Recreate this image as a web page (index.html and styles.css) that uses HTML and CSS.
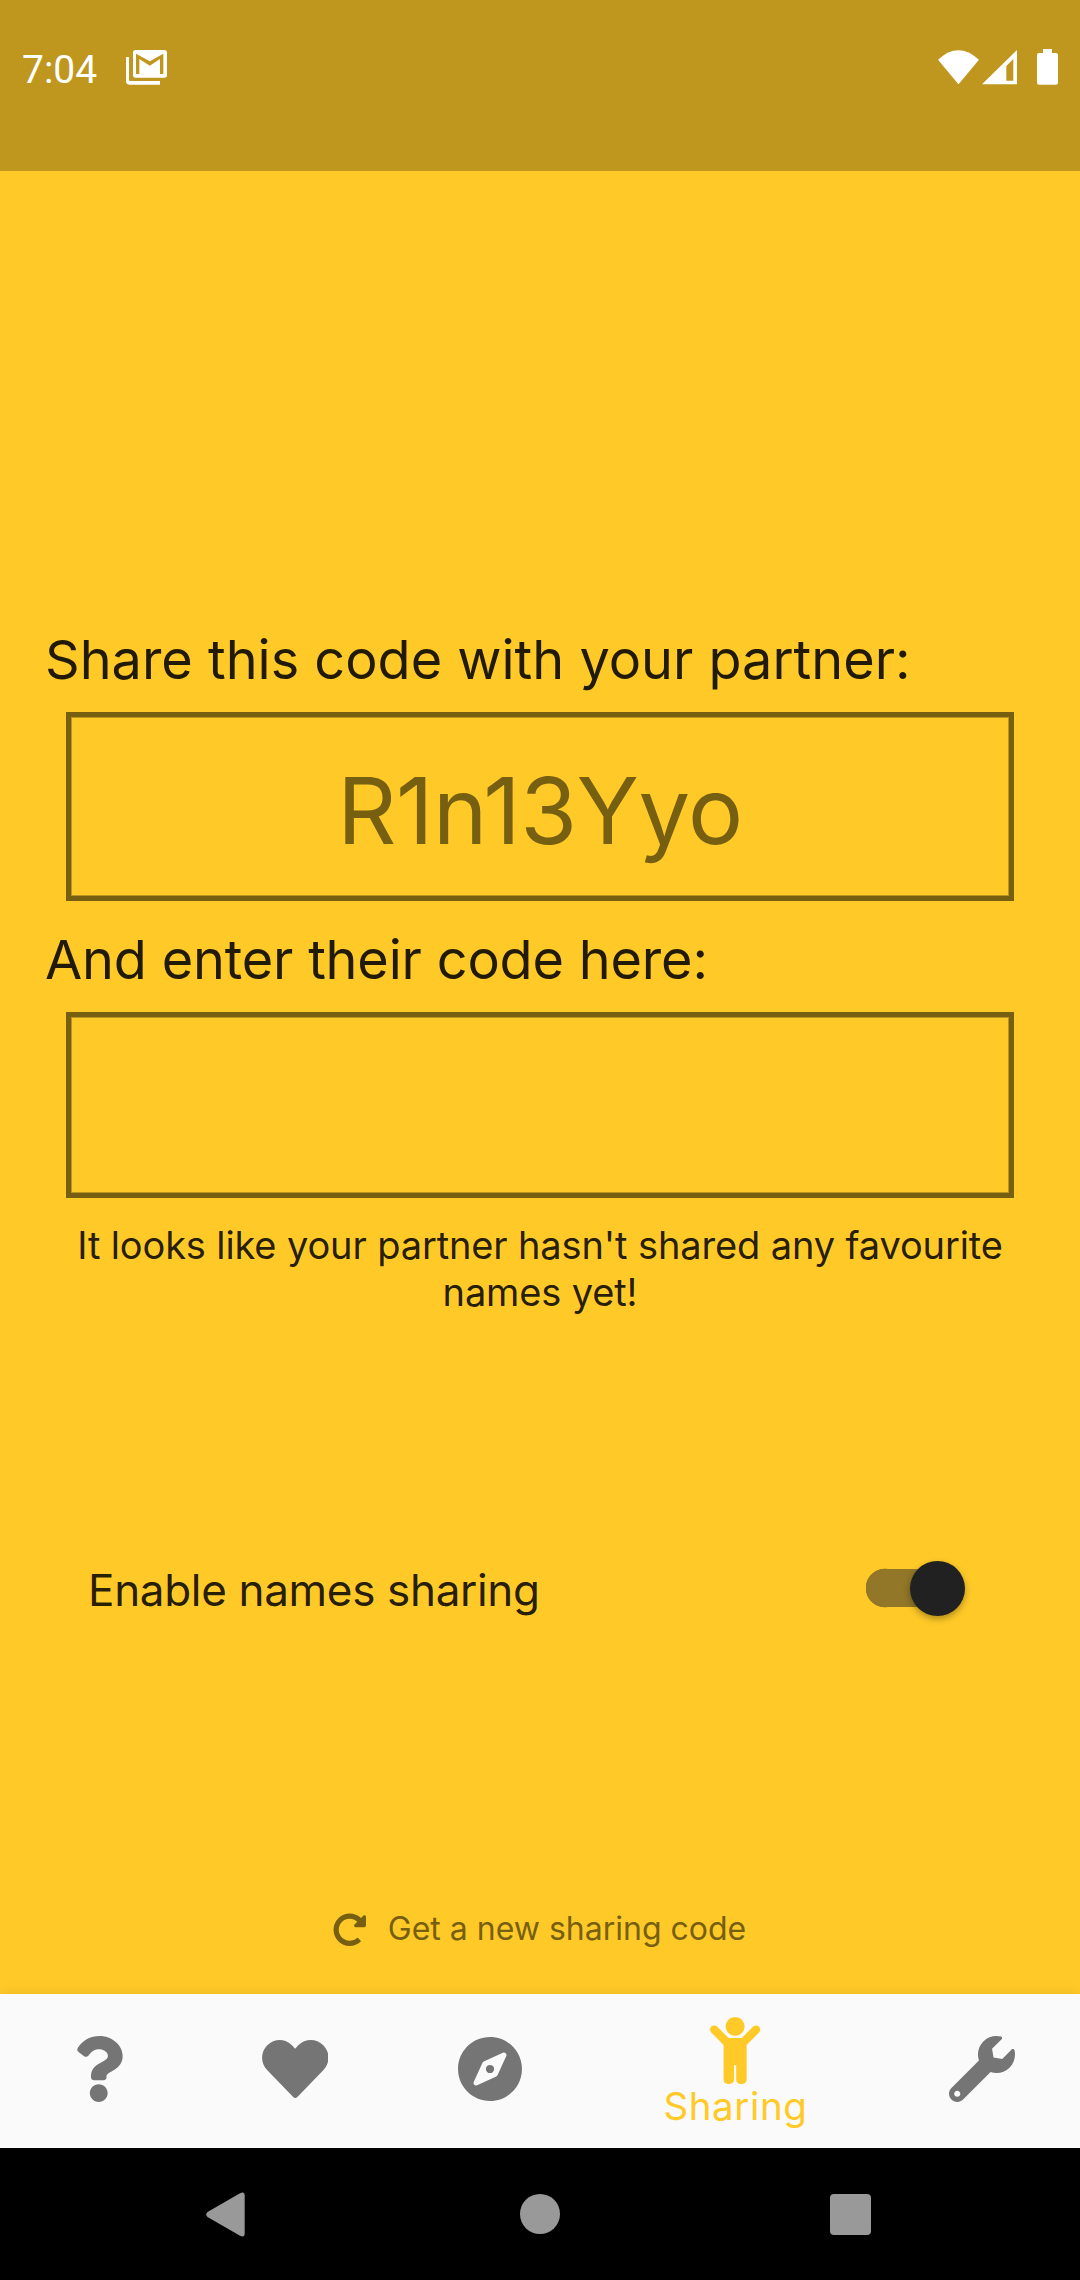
FILE: index.html
```html
<!DOCTYPE html>
<html lang="en">
<head>
<meta charset="utf-8">
<title>Sharing</title>
<link rel="stylesheet" href="styles.css">
</head>
<body>
<div class="screen">
  <header class="status">
    <span class="clock">7:04</span>
    <svg class="mail" viewBox="378 90 123 104" fill="#fff"><path d="M378 111h9v69q0 3 3 3h90v11H388q-10 0-10-10z"/><path fill-rule="evenodd" d="M407 90h86q8 0 8 8v67q0 8-8 8h-86q-8 0-8-8V98q0-8 8-8zM408 101v61h10v-45l31.500 20 30.500-20v45h10v-61l-40.500 23z"/></svg>
    <svg class="wifi" viewBox="114 90 123 103" fill="#fff"><path d="M114 119Q175 63 237 119L175.500 193z"/></svg>
    <svg class="signal" viewBox="246 91 105 103" fill="#fff"><path fill-rule="evenodd" d="M351 91V194H246zM340 118L319 139V183H340z"/></svg>
    <svg class="battery" viewBox="411 87 63 107" fill="#fff"><path d="M429 87h27v12h12q6 0 6 6v83q0 6-6 6h-51q-6 0-6-6v-83q0-6 6-6h12z"/></svg>
  </header>

  <main class="content">
    <h1 class="heading">Share this code with your partner:</h1>
    <div class="box box-code">R1n13Yyo</div>
    <h1 class="heading heading-entry">And enter their code here:</h1>
    <div class="box box-entry"></div>
    <p class="note">It looks like your partner hasn't shared any favourite names yet!</p>
    <div class="option">
      <span class="option-label">Enable names sharing</span>
      <span class="switch"><span class="thumb"></span></span>
    </div>
    <div class="renew">
      <svg class="redo" viewBox="0 0 512 512" fill="#775f12"><path d="M256.455 8c66.269.119 126.437 26.233 170.859 68.685l35.715-35.715C478.149 25.851 504 36.559 504 57.941V192c0 13.255-10.745 24-24 24H345.941c-21.382 0-32.090-25.851-16.971-40.971l41.750-41.750c-30.864-28.899-70.801-44.907-113.230-45.273-92.398-.798-170.283 73.977-169.484 169.442C88.764 348.009 162.184 424 256 424c41.127 0 79.997-14.678 110.629-41.556 4.743-4.161 11.906-3.908 16.368.553l39.662 39.662c4.872 4.872 4.631 12.815-.482 17.433C378.202 479.813 319.926 504 256 504 119.034 504 8.001 392.967 8 256.002 7.999 119.193 119.646 7.755 256.455 8z"/></svg>
      <span>Get a new sharing code</span>
    </div>
  </main>

  <nav class="tabs">
    <span class="tab"><svg width="49.500" height="66" viewBox="0 0 384 512"><path d="M202.021 0C122.202 0 70.503 32.703 29.914 91.026c-7.363 10.580-5.093 25.086 5.178 32.874l43.138 32.709c10.373 7.865 25.132 6.026 33.253-4.148 25.049-31.381 43.630-49.449 82.757-49.449 30.764 0 68.816 19.799 68.816 49.631 0 22.552-18.617 34.134-48.993 51.164-35.423 19.860-82.299 44.576-82.299 106.405V320c0 13.255 10.745 24 24 24h72.471c13.255 0 24-10.745 24-24v-5.773c0-42.860 125.268-44.645 125.268-160.627C377.504 66.256 286.902 0 202.021 0zM192 373.459c-38.196 0-69.271 31.075-69.271 69.271 0 38.195 31.075 69.270 69.271 69.270s69.271-31.075 69.271-69.271-31.075-69.270-69.271-69.270z"/></svg></span>
    <span class="tab"><svg width="66.600" height="66" viewBox="664 168 200 198"><path d="M763.500 206L754 196C733 175 701 175 680 196C659 217 659 249 680 271L757 350Q764 358 771 350L848 271C869 249 869 217 848 196C827 175 794 175 773 196Z"/></svg></span>
    <span class="tab"><svg width="64" height="66" viewBox="0 0 496 512"><path d="M225.380 233.370c-12.500 12.500-12.500 32.760 0 45.250 12.490 12.500 32.760 12.500 45.250 0 12.500-12.500 12.500-32.760 0-45.250-12.500-12.490-32.760-12.490-45.250 0zM248 8C111.030 8 0 119.030 0 256s111.030 248 248 248 248-111.030 248-248S384.970 8 248 8zm126.140 148.050L308.170 300.400a31.938 31.938 0 0 1-15.770 15.770l-144.340 65.970c-16.650 7.610-33.810-9.550-26.200-26.200l65.980-144.350a31.938 31.938 0 0 1 15.770-15.770l144.340-65.970c16.650-7.600 33.800 9.550 26.190 26.200z"/></svg></span>
    <span class="tab tab-active"><svg width="50.250" height="67" viewBox="0 0 384 512"><path d="M120 72c0-39.765 32.235-72 72-72s72 32.235 72 72c0 39.764-32.235 72-72 72s-72-32.236-72-72zm254.627 1.373c-12.496-12.497-32.758-12.497-45.254 0L242.745 160H141.254L54.627 73.373c-12.496-12.497-32.758-12.497-45.254 0-12.497 12.497-12.497 32.758 0 45.255L104 213.254V480c0 17.673 14.327 32 32 32h16c17.673 0 32-14.327 32-32V368h16v112c0 17.673 14.327 32 32 32h16c17.673 0 32-14.327 32-32V213.254l94.627-94.626c12.497-12.497 12.497-32.758 0-45.255z"/></svg><span class="tab-label">Sharing</span></span>
    <span class="tab"><svg width="66" height="66" viewBox="0 0 512 512"><path d="M507.730 109.100c-2.240-9.030-13.540-12.090-20.120-5.510l-74.360 74.360-67.880-11.310-11.310-67.880 74.360-74.360c6.620-6.620 3.430-17.900-5.660-20.160-47.380-11.740-99.550.910-136.580 37.930-39.640 39.640-50.550 97.100-34.050 147.200L18.740 402.760c-24.990 24.990-24.990 65.510 0 90.500 24.990 24.990 65.510 24.990 90.500 0l213.210-213.210c50.120 16.710 107.470 5.680 147.370-34.220 37.070-37.070 49.700-89.320 37.910-136.730zM64 472c-13.250 0-24-10.750-24-24 0-13.260 10.750-24 24-24s24 10.740 24 24c0 13.250-10.750 24-24 24z"/></svg></span>
  </nav>

  <footer class="system">
    <svg class="back" viewBox="0 0 39 45" fill="#999"><path d="M1.500 20L34 1.200Q38.700-1.200 38.700 4V41Q38.700 46.200 34 43.800L1.500 25Q-1 22.500 1.500 20z"/></svg>
    <span class="home"></span>
    <span class="recent"></span>
  </footer>
</div>
</body>
</html>
```
FILE: styles.css
```css
body {
  margin: 0;
  font-family: Inter, "Liberation Sans", sans-serif;
}

svg {
  display: block;
  flex: none;
}

.screen {
  display: flex;
  flex-direction: column;
  width: 1080px;
  height: 2280px;
  overflow: hidden;
  background: #ffca28;
  color: rgba(0, 0, 0, 0.87);
}

/* Android status bar */
.status {
  display: flex;
  align-items: flex-start;
  box-sizing: border-box;
  height: 171px;
  padding: 49px 22px 0;
  background: #c0971e;
}

.clock {
  width: 104px;
  color: #fff;
  font-family: Roboto, sans-serif;
  font-size: 39px;
  line-height: 42px;
}

.mail {
  width: 41px;
  height: 34.7px;
  margin-top: 1px;
}

.wifi {
  width: 41px;
  height: 34.3px;
  margin: 1px 3px 0 auto;
}

.signal {
  width: 35px;
  height: 34.3px;
  margin: 1.3px 20px 0 0;
}

.battery {
  width: 21px;
  height: 35.7px;
}

/* Sharing page */
.content {
  display: flex;
  flex: 1;
  flex-direction: column;
  padding-top: 459px;
}

.heading {
  margin: 0 45px;
  font-size: 54px;
  font-weight: 400;
  line-height: 60px;
}

.heading-entry {
  margin-top: 29px;
  letter-spacing: -0.18px;
}

.box {
  box-sizing: border-box;
  margin: 22px 66px 0;
  border: 5px solid #775f12;
  box-shadow: inset 0 0 0 1px rgba(119, 95, 18, 0.5);
}

.box-code {
  height: 189px;
  padding-top: 6px;
  color: #775f12;
  font-size: 92px;
  letter-spacing: -0.43px;
  line-height: 176px;
  text-align: center;
}

.box-entry {
  height: 186px;
}

.note {
  margin: 24px 50px 0;
  font-size: 38px;
  letter-spacing: -0.13px;
  line-height: 47px;
  text-align: center;
}

.option {
  display: flex;
  justify-content: space-between;
  margin: 244px 115.5px 0 88px;
}

.option-label {
  padding-top: 2px;
  font-size: 44px;
  letter-spacing: -0.32px;
  line-height: 56px;
}

.switch {
  display: flex;
  align-items: center;
  justify-content: flex-end;
  box-sizing: border-box;
  width: 99px;
  height: 56px;
  background:
    radial-gradient(circle at 19px 28px, #917727 19px, transparent 19.7px),
    linear-gradient(#917727, #917727) 19px 9px / 55px 38px no-repeat;
}

.thumb {
  width: 55px;
  height: 55px;
  border-radius: 50%;
  background: #212121;
  box-shadow: 0 3px 7px rgba(0, 0, 0, 0.32);
}

.renew {
  display: flex;
  align-items: flex-start;
  justify-content: center;
  gap: 21.5px;
  margin: 290px 1px 0 0;
  color: #775f12;
  font-size: 32px;
  line-height: 41px;
}

.redo {
  width: 33.5px;
  height: 33.5px;
  margin-top: 5px;
}

/* Bottom tab bar */
.tabs {
  display: grid;
  grid-template-columns: 197px 196px 194px 297px 196px;
  height: 154px;
  background: #fafafa;
  box-shadow: 0 -2px 12px rgba(0, 0, 0, 0.07);
}

.tab {
  display: flex;
  flex-direction: column;
  align-items: center;
  padding-top: 42px;
  fill: #757575;
}

.tab-active {
  padding-top: 23px;
  color: #ffca28;
  fill: #ffca28;
}

.tab-label {
  font-size: 38.5px;
  letter-spacing: 0.6px;
  line-height: 44px;
}

/* Android navigation buttons */
.system {
  display: flex;
  align-items: center;
  justify-content: space-between;
  height: 132px;
  padding: 0 209px 0 206px;
  background: #000;
}

.back {
  width: 39px;
  height: 45px;
}

.home {
  width: 40px;
  height: 40px;
  margin-left: 4px;
  border-radius: 50%;
  background: #999;
}

.recent {
  width: 41px;
  height: 41px;
  border-radius: 4px;
  background: #999;
}
```
